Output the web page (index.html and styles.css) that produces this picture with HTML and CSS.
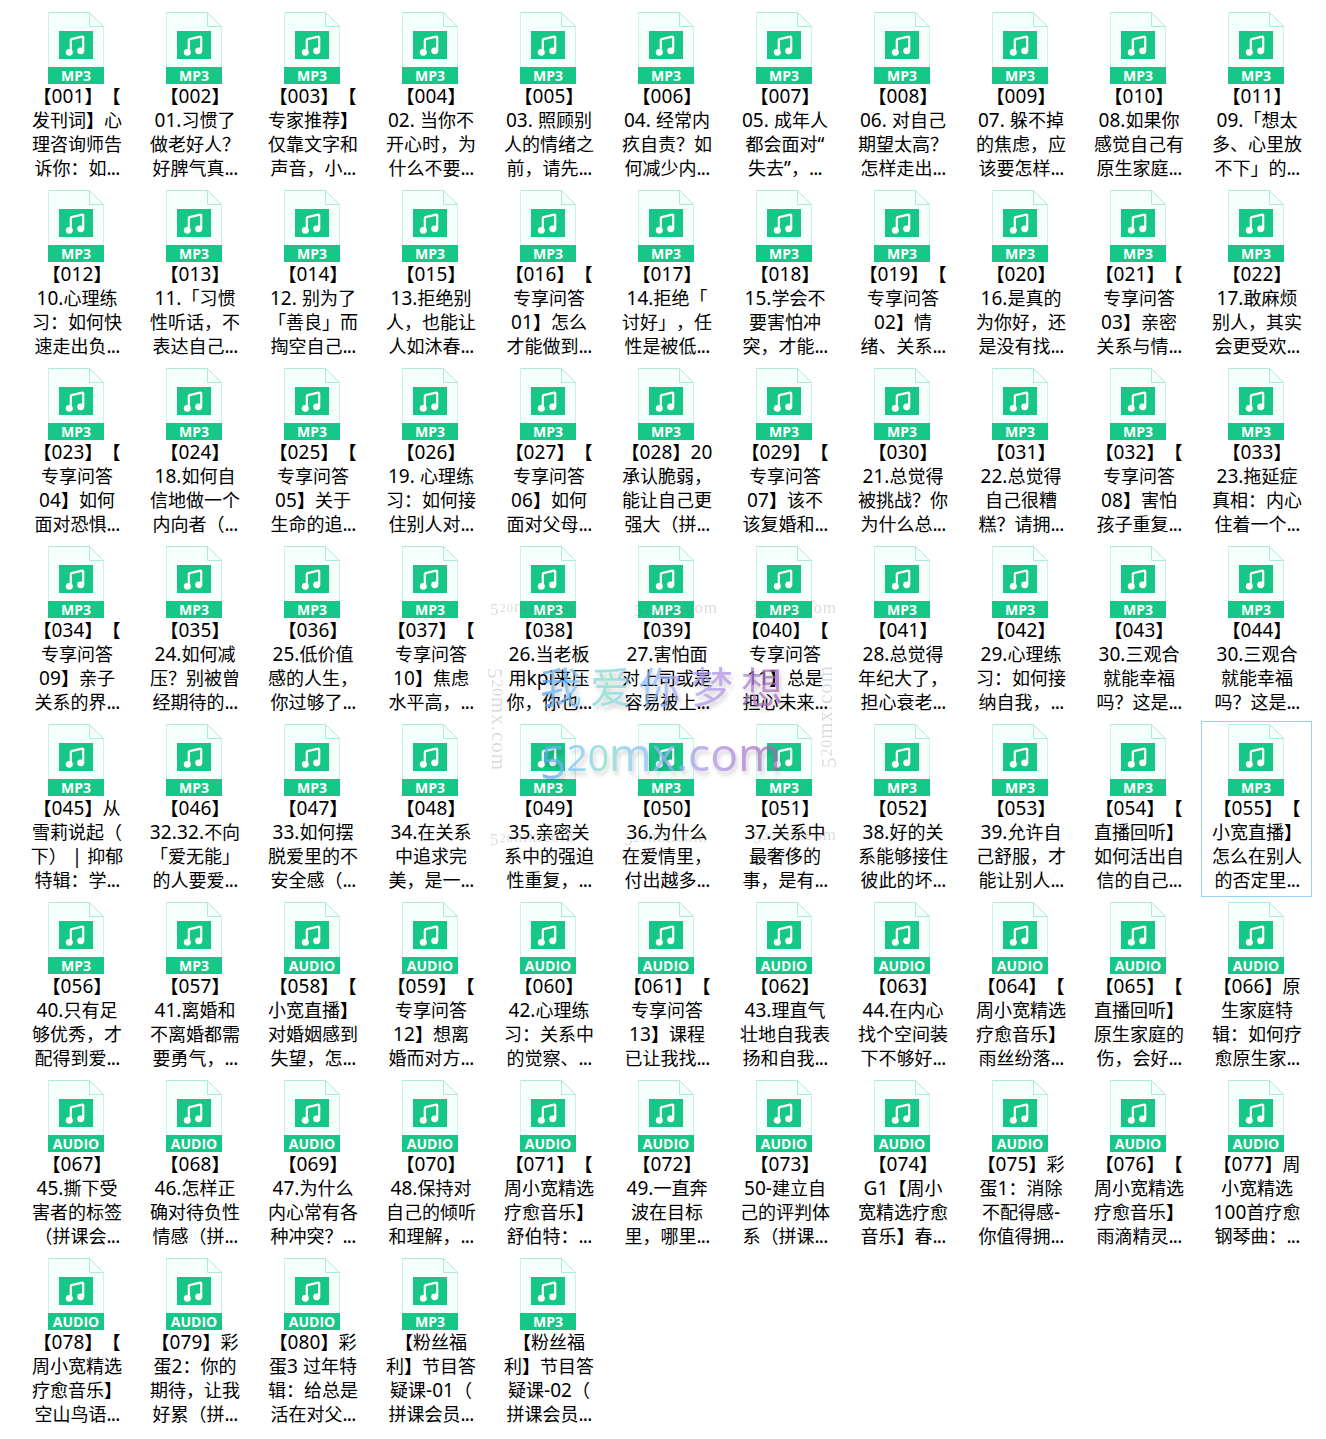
FILE: index.html
```html
<!DOCTYPE html>
<html lang="zh-CN">
<head>
<meta charset="utf-8">
<title>音频文件</title>
<link rel="stylesheet" href="styles.css">
</head>
<body>
<svg class="defs" width="0" height="0" aria-hidden="true">
  <symbol id="file" viewBox="0 0 58 72">
    <path d="M1.500 .5H42.500L56.500 14.500V71.500H1.500Z" fill="#f5fffb" stroke="#cef2e4"/>
    <path d="M1.500 .5H42.500L56.500 14.500H42.500V.5" fill="none" stroke="#b0e9d5"/>
    <path d="M12 19H46V47H12Z" fill="#17c787"/>
    <path d="M1 55H57V72H1Z" fill="#17c787"/>
    <path d="M23.800 40V28.200Q23.800 27.400 24.600 27.100L35.200 24.600Q36.200 24.500 36.200 25.400V38.800" fill="none" stroke="#fff" stroke-width="2.200" stroke-linejoin="round"/>
    <ellipse cx="22.300" cy="40.300" rx="3.500" ry="3.400" fill="#fff"/>
    <ellipse cx="33.700" cy="38.800" rx="3.500" ry="3.400" fill="#fff"/>
  </symbol>
</svg>
<main class="files" id="files"></main>
<svg class="watermark" viewBox="0 0 1326 1439" aria-hidden="true">
  <defs>
    <linearGradient id="tint" gradientUnits="userSpaceOnUse" x1="541" y1="0" x2="781" y2="0">
      <stop offset="0" stop-color="#5a9fe8"/><stop offset=".15" stop-color="#7cc4f8"/>
      <stop offset=".27" stop-color="#80dfc4"/><stop offset=".4" stop-color="#86c2fa"/>
      <stop offset=".6" stop-color="#a5a0f0"/><stop offset=".75" stop-color="#ae91e4"/>
      <stop offset="1" stop-color="#a85fb4"/>
    </linearGradient>
  </defs>
  <g class="brand" fill="url(#tint)">
    <text class="slogan" y="703"><tspan x="540">我</tspan><tspan x="590">爱</tspan><tspan x="639">你</tspan><tspan x="691">梦</tspan><tspan x="741">想</tspan></text>
    <text class="domain" x="540" y="779" textLength="241" lengthAdjust="spacingAndGlyphs">5<tspan class="low" dy="-8">20</tspan>mx.com</text>
  </g>
  <g class="faint">
    <text x="490" y="615" textLength="84">5<tspan class="small" dy="-3">20</tspan>mx.com</text>
    <text x="634" y="616" textLength="83">5<tspan class="small" dy="-3">20</tspan>mx.com</text>
    <text x="753" y="616" textLength="83">5<tspan class="small" dy="-3">20</tspan>mx.com</text>
    <text x="490" y="845" textLength="84">5<tspan class="small" dy="-3">20</tspan>mx.com</text>
    <text x="624" y="845" textLength="83">5<tspan class="small" dy="-3">20</tspan>mx.com</text>
    <text x="753" y="843" textLength="83">5<tspan class="small" dy="-3">20</tspan>mx.com</text>
    <text class="side" transform="translate(488 668) rotate(90)" textLength="102">5<tspan class="small" dy="-4">20</tspan>mx.com</text>
    <text class="side" transform="translate(836 768) rotate(-90)" textLength="102">5<tspan class="small" dy="-4">20</tspan>mx.com</text>
  </g>
</svg>
<script src="files.js"></script>
</body>
</html>
```
FILE: styles.css
```css
* { box-sizing: border-box; }
body {
  margin: 0;
  background: #fff;
  color: #000;
  font-family: "Noto Sans CJK SC", sans-serif;
}
.defs { display: block; height: 0; }
.files {
  display: grid;
  grid-template-columns: repeat(11, 111px);
  grid-auto-rows: 176px;
  gap: 2px 7px;
  padding: 9px 0 0 21px;
}
.file {
  display: flex;
  flex-direction: column;
  align-items: center;
  padding-top: 2px;
  border: 1px solid transparent;
}
.file.selected { border-color: #99d1f5; }
.icon { display: block; width: 58px; height: 72px; margin-right: 1px; }
.kind {
  fill: #fff;
  font: bold 14px "Open Sans", sans-serif;
  text-anchor: middle;
}
.name {
  width: 96px;
  margin-left: 1px;
  font-size: 18px;
  text-spacing-trim: space-all;
}
.line {
  display: flex;
  justify-content: center;
  height: 24px;
  line-height: 23px;
  white-space: pre;
}
.latin {
  font-family: "Noto Sans", sans-serif;
  font-size: 19px;
  line-height: 24px;
  letter-spacing: 0.1px;
}
.dots { letter-spacing: -0.8px; }
.bracket { font-weight: bold; }
.watermark {
  position: absolute;
  top: 0;
  left: 0;
  width: 1326px;
  height: 1439px;
  pointer-events: none;
}
.brand {
  opacity: .75;
  filter: drop-shadow(2px 4px 2px rgba(0, 0, 0, .22));
}
.slogan { font: 42px "Noto Sans CJK SC", sans-serif; }
.domain { font: 500 45px "Open Sans", sans-serif; }
.low { font-size: 36px; }
.faint {
  fill: #777;
  opacity: .25;
  font: 17px "Liberation Serif", serif;
}
.faint .small { font-size: .75em; }
.side { font-size: 21px; }
```
FILE: files.js
```js
// One entry per file; "/" separates the wrapped lines of its name.
const names = `【001】【/发刊词】心/理咨询师告/诉你：如...
【002】/01.习惯了/做老好人？/好脾气真...
【003】【/专家推荐】/仅靠文字和/声音，小...
【004】/02. 当你不/开心时，为/什么不要...
【005】/03. 照顾别/人的情绪之/前，请先...
【006】/04. 经常内/疚自责？如/何减少内...
【007】/05. 成年人/都会面对“/失去”，...
【008】/06. 对自己/期望太高？/怎样走出...
【009】/07. 躲不掉/的焦虑，应/该要怎样...
【010】/08.如果你/感觉自己有/原生家庭...
【011】/09.「想太/多、心里放/不下」的...
【012】/10.心理练/习：如何快/速走出负...
【013】/11.「习惯/性听话，不/表达自己...
【014】/12. 别为了/「善良」而/掏空自己...
【015】/13.拒绝别/人，也能让/人如沐春...
【016】【/专享问答/01】怎么/才能做到...
【017】/14.拒绝「/讨好」，任/性是被低...
【018】/15.学会不/要害怕冲/突，才能...
【019】【/专享问答/02】情/绪、关系...
【020】/16.是真的/为你好，还/是没有找...
【021】【/专享问答/03】亲密/关系与情...
【022】/17.敢麻烦/别人，其实/会更受欢...
【023】【/专享问答/04】如何/面对恐惧...
【024】/18.如何自/信地做一个/内向者（...
【025】【/专享问答/05】关于/生命的追...
【026】/19. 心理练/习：如何接/住别人对...
【027】【/专享问答/06】如何/面对父母...
【028】20/承认脆弱，/能让自己更/强大（拼...
【029】【/专享问答/07】该不/该复婚和...
【030】/21.总觉得/被挑战？你/为什么总...
【031】/22.总觉得/自己很糟/糕？请拥...
【032】【/专享问答/08】害怕/孩子重复...
【033】/23.拖延症/真相：内心/住着一个...
【034】【/专享问答/09】亲子/关系的界...
【035】/24.如何减/压？别被曾/经期待的...
【036】/25.低价值/感的人生，/你过够了...
【037】【/专享问答/10】焦虑/水平高，...
【038】/26.当老板/用kpi来压/你，你也...
【039】/27.害怕面/对上司或是/容易被上...
【040】【/专享问答/11】总是/担心未来...
【041】/28.总觉得/年纪大了，/担心衰老...
【042】/29.心理练/习：如何接/纳自我，...
【043】/30.三观合/就能幸福/吗？这是...
【044】/30.三观合/就能幸福/吗？这是...
【045】从/雪莉说起（/下） | 抑郁/特辑：学...
【046】/32.32.不向/「爱无能」/的人要爱...
【047】/33.如何摆/脱爱里的不/安全感（...
【048】/34.在关系/中追求完/美，是一...
【049】/35.亲密关/系中的强迫/性重复，...
【050】/36.为什么/在爱情里，/付出越多...
【051】/37.关系中/最奢侈的/事，是有...
【052】/38.好的关/系能够接住/彼此的坏...
【053】/39.允许自/己舒服，才/能让别人...
【054】【/直播回听】/如何活出自/信的自己...
【055】【/小宽直播】/怎么在别人/的否定里...
【056】/40.只有足/够优秀，才/配得到爱...
【057】/41.离婚和/不离婚都需/要勇气，...
【058】【/小宽直播】/对婚姻感到/失望，怎...
【059】【/专享问答/12】想离/婚而对方...
【060】/42.心理练/习：关系中/的觉察、...
【061】【/专享问答/13】课程/已让我找...
【062】/43.理直气/壮地自我表/扬和自我...
【063】/44.在内心/找个空间装/下不够好...
【064】【/周小宽精选/疗愈音乐】/雨丝纷落...
【065】【/直播回听】/原生家庭的/伤，会好...
【066】原/生家庭特/辑：如何疗/愈原生家...
【067】/45.撕下受/害者的标签/（拼课会...
【068】/46.怎样正/确对待负性/情感（拼...
【069】/47.为什么/内心常有各/种冲突？...
【070】/48.保持对/自己的倾听/和理解，...
【071】【/周小宽精选/疗愈音乐】/舒伯特：...
【072】/49.一直奔/波在目标/里，哪里...
【073】/50-建立自/己的评判体/系（拼课...
【074】/G1【周小/宽精选疗愈/音乐】春...
【075】彩/蛋1：消除/不配得感-/你值得拥...
【076】【/周小宽精选/疗愈音乐】/雨滴精灵...
【077】周/小宽精选/100首疗愈/钢琴曲：...
【078】【/周小宽精选/疗愈音乐】/空山鸟语...
【079】彩/蛋2：你的/期待，让我/好累（拼...
【080】彩/蛋3 过年特/辑：给总是/活在对父...
【粉丝福/利】节目答/疑课-01（/拼课会员...
【粉丝福/利】节目答/疑课-02（/拼课会员...`.split('\n');

// Wrap dots, Latin runs and lenticular brackets; Chinese text stays as it is.
const markRuns = line => line.replace(/\.\.\.|[ -~“”]+?(?=\.\.\.|[^ -~“”]|$)|[【】]/g, run => {
  if (run === '...') return `<span class="latin dots">${run}</span>`;
  if (/[【】]/.test(run)) return `<span class="bracket">${run}</span>`;
  return `<span class="latin">${run}</span>`;
});

document.getElementById('files').innerHTML = names.map((name, i) => {
  const kind = i >= 57 && i < 80 ? 'AUDIO' : 'MP3';
  const lines = name.split('/').map(l => `<div class="line">${markRuns(l)}</div>`).join('');
  return `<article class="file${i === 54 ? ' selected' : ''}">
    <svg class="icon" viewBox="0 0 58 72"><use href="#file"/><text class="kind" x="29" y="69">${kind}</text></svg>
    <div class="name">${lines}</div></article>`;
}).join('');
```
